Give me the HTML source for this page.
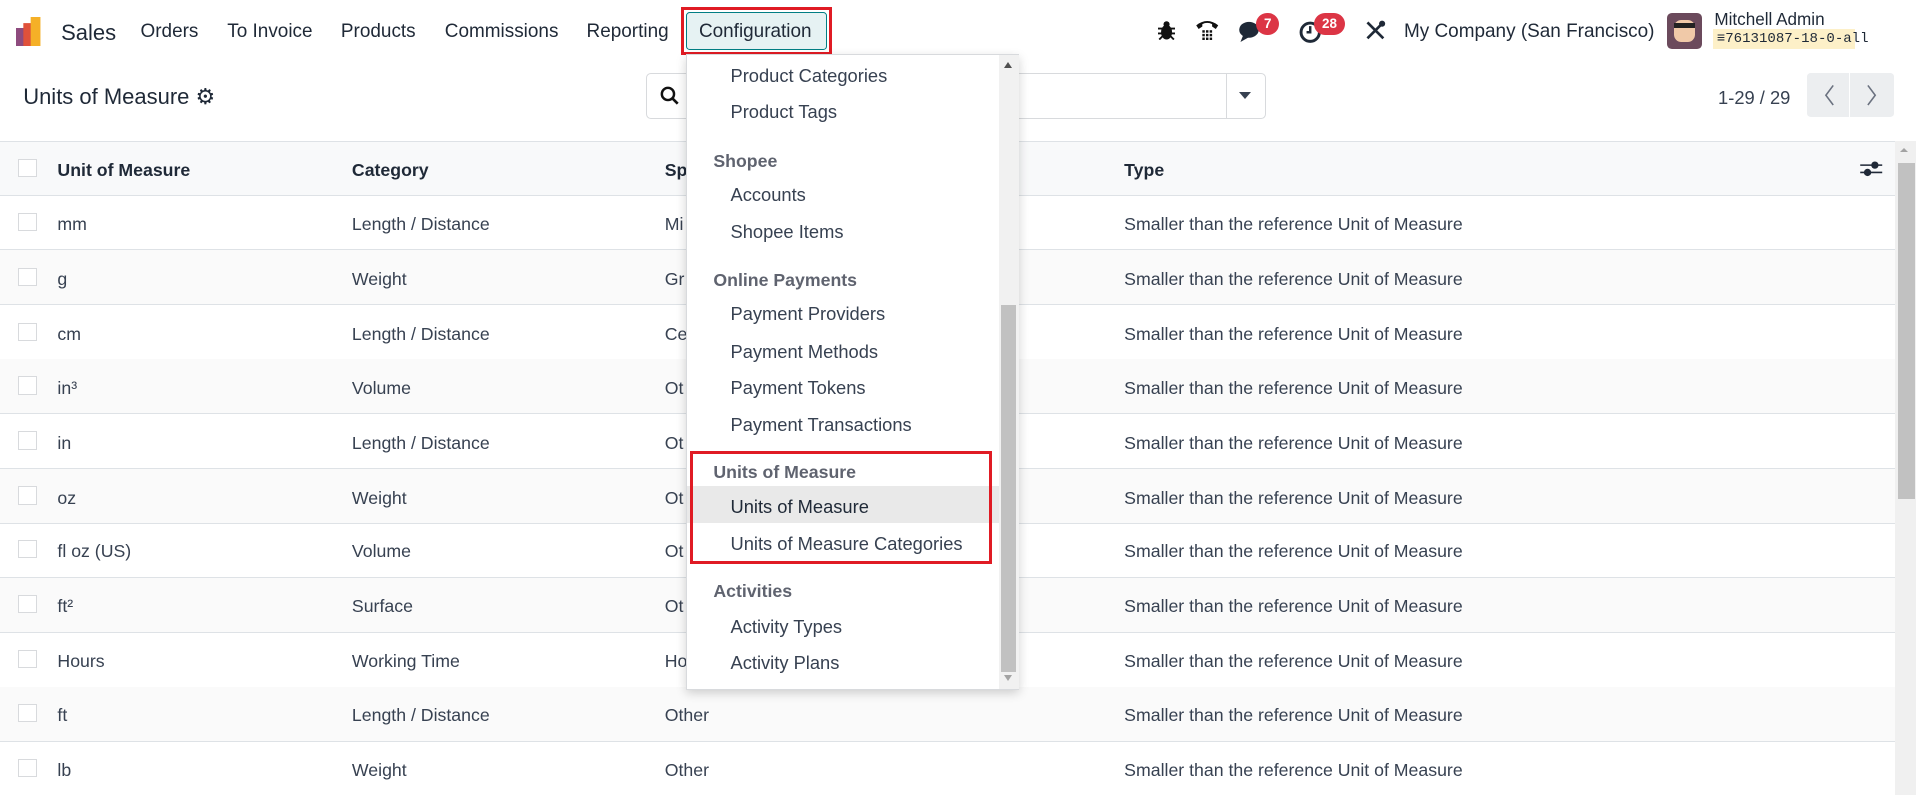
<!DOCTYPE html>
<html><head><meta charset="utf-8"><style>
*{box-sizing:border-box;margin:0;padding:0}
html,body{width:1916px;height:796px;overflow:hidden;background:#fff}
#w{zoom:1.22194;width:1568px;height:651px;position:relative;font-family:"Liberation Sans",sans-serif;color:#374151;font-size:14.5px;overflow:hidden}
.a{position:absolute;white-space:nowrap}
.nav{font-size:15.5px;color:#1f2937;top:17px}
.row{position:absolute;left:0;width:1551px;height:45px;border-bottom:1px solid #dee2e6}
.row .cb{position:absolute;left:15px;top:14px;width:15px;height:15px;border:1px solid #d8dadd;background:#fff}
.row span{position:absolute;top:15px}
.c1{left:47px}.c2{left:288px}.c3{left:544px}.c4{left:920px}
.dd{position:absolute;left:561px;top:44px;width:273px;height:521px;background:#fff;border:1px solid #d8dadd;box-shadow:0 3px 8px rgba(0,0,0,.18)}
.di{position:absolute;left:36px;font-size:15px;color:#374151}
.dh{position:absolute;left:22px;font-size:14.5px;font-weight:bold;color:#5f636f}
.badge{position:absolute;background:#dc3545;color:#fff;font-size:11px;font-weight:bold;border-radius:9px;height:18px;line-height:18px;text-align:center}
</style></head><body><div id="w">
<div class="a" style="left:0;top:0;width:1568px;height:52px;background:#fff"></div>
<svg class="a" style="left:13px;top:14px" width="26" height="24"><rect x="0" y="9" width="8" height="15" fill="#8e4b7e"/><rect x="6" y="5" width="8" height="19" fill="#e0513a"/><rect x="12" y="0" width="8" height="24" fill="#f5b027"/></svg>
<div class="a" style="left:50px;top:16px;font-size:18px;color:#1f2937">Sales</div>
<div class="a nav" style="left:115px">Orders</div>
<div class="a nav" style="left:186px">To Invoice</div>
<div class="a nav" style="left:279px">Products</div>
<div class="a nav" style="left:364px">Commissions</div>
<div class="a nav" style="left:480px">Reporting</div>
<div class="a" style="left:557px;top:6px;width:124px;height:39px;border:3px solid #e01b24"></div>
<div class="a" style="left:561px;top:10px;width:116px;height:31px;background:#e6f2f3;border:1px solid #017e84;border-radius:3px"></div>
<div class="a nav" style="left:572px">Configuration</div>
<svg class="a" style="left:948px;top:16px" width="14" height="17"><ellipse cx="7" cy="10" rx="4.5" ry="6" fill="#111"/><circle cx="7" cy="3.5" r="2.5" fill="#111"/><path d="M0 7h14M0 11h14M1 16l3-3M13 16l-3-3" stroke="#111" stroke-width="1.5"/></svg>
<svg class="a" style="left:978px;top:15px" width="20" height="20"><path d="M1 6 Q10 -1 19 6 L17 9 L14 7 L14 5 Q10 3 6 5 L6 7 L3 9Z" fill="#111"/><g fill="#111"><rect x="6" y="10" width="2" height="2"/><rect x="9" y="10" width="2" height="2"/><rect x="12" y="10" width="2" height="2"/><rect x="6" y="13" width="2" height="2"/><rect x="9" y="13" width="2" height="2"/><rect x="12" y="13" width="2" height="2"/><rect x="6" y="16" width="2" height="2"/><rect x="9" y="16" width="2" height="2"/><rect x="12" y="16" width="2" height="2"/></g></svg>
<svg class="a" style="left:1013px;top:16px" width="22" height="20"><ellipse cx="9" cy="8" rx="8" ry="6.5" fill="#1f2937"/><path d="M4 13 L2 18 L9 14Z" fill="#1f2937"/></svg>
<div class="badge" style="left:1028px;top:11px;width:19px">7</div>
<svg class="a" style="left:1062px;top:16px" width="20" height="20"><circle cx="10" cy="10" r="7.5" fill="none" stroke="#1f2937" stroke-width="2.4"/><path d="M10 5v5h-3" stroke="#1f2937" stroke-width="2" fill="none"/></svg>
<div class="badge" style="left:1075px;top:11px;width:26px">28</div>
<svg class="a" style="left:1117px;top:16px" width="17" height="17"><path d="M2 2L15 15M15 2L2 15" stroke="#1f2937" stroke-width="2.2"/><circle cx="14" cy="3" r="2.5" fill="#1f2937"/></svg>
<div class="a" style="left:1149px;top:17px;font-size:15.5px;color:#1f2937">My Company (San Francisco)</div>
<div class="a" style="left:1364px;top:11px;width:29px;height:29px;border-radius:4px;background:#6b4a5c"></div>
<div class="a" style="left:1370px;top:16px;width:17px;height:18px;border-radius:6px;background:#f0c9a8"></div>
<div class="a" style="left:1370px;top:19px;width:17px;height:4px;background:#222"></div>
<div class="a" style="left:1403px;top:8px;font-size:14px;color:#1f2937">Mitchell Admin</div>
<div class="a" style="left:1402px;top:24px;width:116px;height:16px;background:#fdf0c8"></div>
<div class="a" style="left:1405px;top:25px;font-family:'Liberation Mono',monospace;font-size:11.5px;color:#1f2937">≡76131087-18-0-all</div>
<div class="a" style="left:19px;top:69px;font-size:18px;color:#1f2937">Units of Measure ⚙</div>
<div class="a" style="left:529px;top:60px;width:507px;height:37px;border:1px solid #d8dadd;border-radius:4px"></div>
<div class="a" style="left:1003px;top:60px;width:1px;height:37px;background:#d8dadd"></div>
<svg class="a" style="left:540px;top:70px" width="16" height="16"><circle cx="6.5" cy="6.5" r="5" fill="none" stroke="#111" stroke-width="2"/><path d="M10 10l4.5 4.5" stroke="#111" stroke-width="2.2"/></svg>
<div class="a" style="left:1014px;top:75px;border-left:5px solid transparent;border-right:5px solid transparent;border-top:6px solid #374151"></div>
<div class="a" style="left:1406px;top:71px;font-size:15px;color:#374151">1-29 / 29</div>
<div class="a" style="left:1479px;top:60px;width:34px;height:36px;background:#eceef0;border-radius:3px 0 0 3px"></div>
<div class="a" style="left:1514px;top:60px;width:36px;height:36px;background:#eceef0;border-radius:0 3px 3px 0"></div>
<svg class="a" style="left:1490px;top:68px" width="14" height="20"><path d="M10 2L4 10L10 18" stroke="#6b7280" stroke-width="1.3" fill="none"/></svg>
<svg class="a" style="left:1525px;top:68px" width="14" height="20"><path d="M4 2L10 10L4 18" stroke="#6b7280" stroke-width="1.3" fill="none"/></svg>
<div class="row" style="top:115px;background:#f8f9fa;border-top:1px solid #dee2e6;font-weight:bold;color:#1f2937"><div class="cb"></div><span class="c1">Unit of Measure</span><span class="c2">Category</span><span class="c3">Sp</span><span class="c4">Type</span></div>
<svg class="a" style="left:1521px;top:130px" width="20" height="16"><path d="M1 5h18M1 11h18" stroke="#1f2937" stroke-width="1.3"/><circle cx="13" cy="5" r="3" fill="#1f2937"/><circle cx="7" cy="11" r="3" fill="#1f2937"/></svg>
<div class="row" style="top:160px"><div class="cb"></div><span class="c1">mm</span><span class="c2">Length / Distance</span><span class="c3">Mi</span><span class="c4">Smaller than the reference Unit of Measure</span></div>
<div class="row" style="top:205px;background:#fafafa"><div class="cb"></div><span class="c1">g</span><span class="c2">Weight</span><span class="c3">Gr</span><span class="c4">Smaller than the reference Unit of Measure</span></div>
<div class="row" style="top:250px"><div class="cb"></div><span class="c1">cm</span><span class="c2">Length / Distance</span><span class="c3">Ce</span><span class="c4">Smaller than the reference Unit of Measure</span></div>
<div class="row" style="top:294px;background:#fafafa"><div class="cb"></div><span class="c1">in³</span><span class="c2">Volume</span><span class="c3">Ot</span><span class="c4">Smaller than the reference Unit of Measure</span></div>
<div class="row" style="top:339px"><div class="cb"></div><span class="c1">in</span><span class="c2">Length / Distance</span><span class="c3">Ot</span><span class="c4">Smaller than the reference Unit of Measure</span></div>
<div class="row" style="top:384px;background:#fafafa"><div class="cb"></div><span class="c1">oz</span><span class="c2">Weight</span><span class="c3">Ot</span><span class="c4">Smaller than the reference Unit of Measure</span></div>
<div class="row" style="top:428px"><div class="cb"></div><span class="c1">fl oz (US)</span><span class="c2">Volume</span><span class="c3">Ot</span><span class="c4">Smaller than the reference Unit of Measure</span></div>
<div class="row" style="top:473px;background:#fafafa"><div class="cb"></div><span class="c1">ft²</span><span class="c2">Surface</span><span class="c3">Ot</span><span class="c4">Smaller than the reference Unit of Measure</span></div>
<div class="row" style="top:518px"><div class="cb"></div><span class="c1">Hours</span><span class="c2">Working Time</span><span class="c3">Ho</span><span class="c4">Smaller than the reference Unit of Measure</span></div>
<div class="row" style="top:562px;background:#fafafa"><div class="cb"></div><span class="c1">ft</span><span class="c2">Length / Distance</span><span class="c3">Other</span><span class="c4">Smaller than the reference Unit of Measure</span></div>
<div class="row" style="top:607px"><div class="cb"></div><span class="c1">lb</span><span class="c2">Weight</span><span class="c3">Other</span><span class="c4">Smaller than the reference Unit of Measure</span></div>
<div class="a" style="left:1551px;top:115px;width:17px;height:536px;background:#f0f0f0"></div>
<div class="a" style="left:1553px;top:133px;width:14px;height:275px;background:#c1c1c1"></div>
<div class="a" style="left:1555px;top:121px;border-left:4px solid transparent;border-right:4px solid transparent;border-bottom:4px solid #a3a3a3"></div>
<div class="dd">
<div class="di" style="top:8px">Product Categories</div>
<div class="di" style="top:38px">Product Tags</div>
<div class="dh" style="top:79px">Shopee</div>
<div class="di" style="top:106px">Accounts</div>
<div class="di" style="top:136px">Shopee Items</div>
<div class="dh" style="top:176px">Online Payments</div>
<div class="di" style="top:203px">Payment Providers</div>
<div class="di" style="top:234px">Payment Methods</div>
<div class="di" style="top:264px">Payment Tokens</div>
<div class="di" style="top:294px">Payment Transactions</div>
<div style="position:absolute;left:0;top:353px;width:256px;height:30px;background:#e9e9e9"></div>
<div class="dh" style="top:333px">Units of Measure</div>
<div class="di" style="top:361px;color:#1f2937">Units of Measure</div>
<div class="di" style="top:391px">Units of Measure Categories</div>
<div style="position:absolute;left:3px;top:324px;width:247px;height:93px;border:3px solid #e01b24"></div>
<div class="dh" style="top:431px">Activities</div>
<div class="di" style="top:459px">Activity Types</div>
<div class="di" style="top:489px">Activity Plans</div>
<div style="position:absolute;left:256px;top:0;width:16px;height:519px;background:#f1f1f1"></div>
<div style="position:absolute;left:257px;top:205px;width:13px;height:300px;background:#c1c1c1"></div>
<div style="position:absolute;left:260px;top:6px;border-left:4px solid transparent;border-right:4px solid transparent;border-bottom:5px solid #505050"></div>
<div style="position:absolute;left:260px;top:508px;border-left:4px solid transparent;border-right:4px solid transparent;border-top:5px solid #a3a3a3"></div>
</div>
</div></body></html>
